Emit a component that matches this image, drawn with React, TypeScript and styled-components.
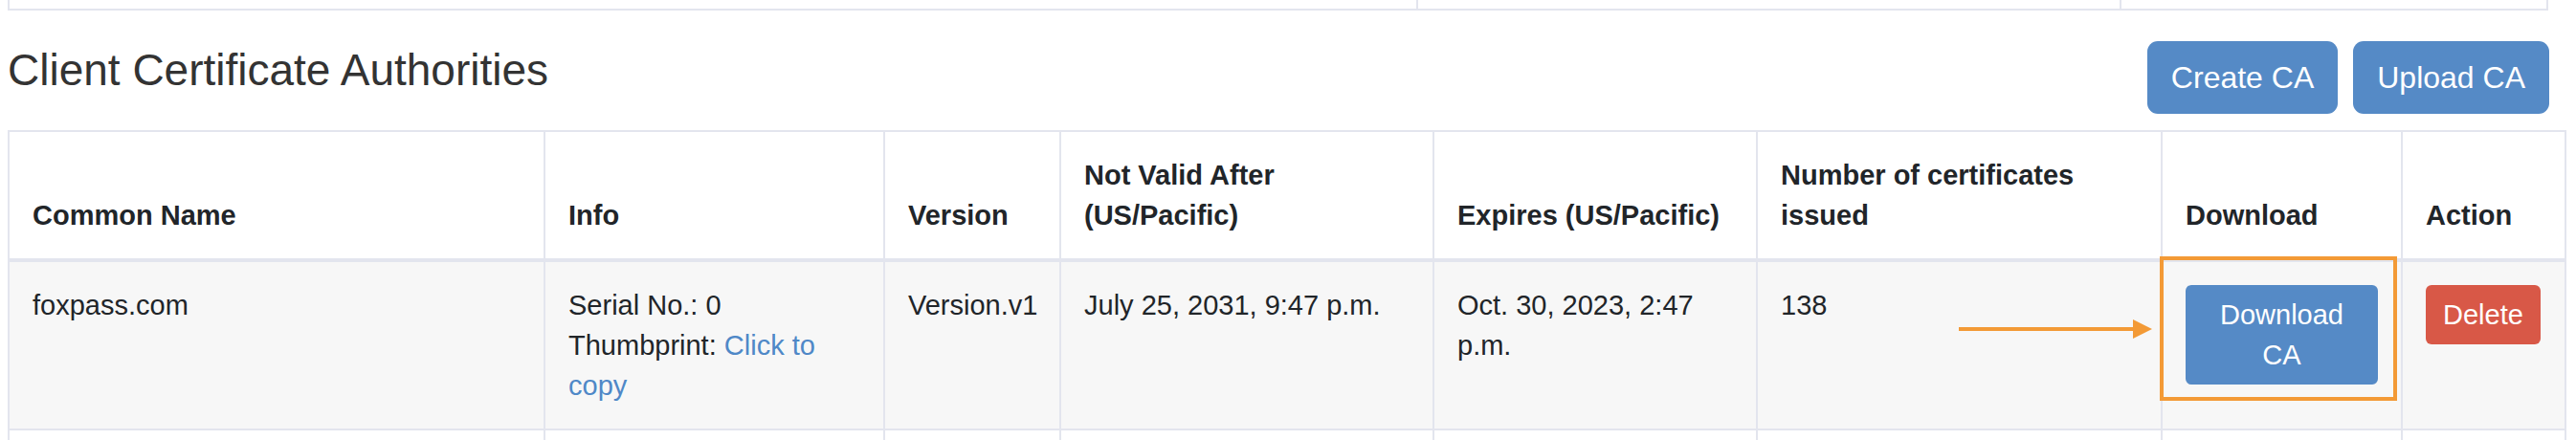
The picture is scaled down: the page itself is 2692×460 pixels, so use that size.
import React from "react";
import styled, { createGlobalStyle } from "styled-components";

const Global = createGlobalStyle`
  html, body { margin: 0; padding: 0; background: #ffffff; }
  body { font-family: "Liberation Sans", Arial, Helvetica, sans-serif; color: #212529; }
  * { box-sizing: border-box; }
`;

const BORDER = "#e3e5ee";

const Page = styled.div`
  padding: 0 12px 0 8px;
  width: 2692px;
`;

const PrevTable = styled.table`
  width: 2653px;
  border-collapse: collapse;
  table-layout: fixed;
`;

const PrevCell = styled.td`
  height: 10px;
  padding: 0;
  border: 2px solid ${BORDER};
  border-top: none;
`;

const Header = styled.div`
  display: flex;
  justify-content: space-between;
  align-items: flex-start;
  margin-top: 32px;
  padding-right: 16px;
`;

const Title = styled.h3`
  margin: 3px 0 0 0;
  font-size: 46px;
  line-height: 54px;
  font-weight: 400;
  color: #333333;
`;

const ButtonGroup = styled.div`
  display: flex;
  gap: 16px;
`;

const Button = styled.button<{ $variant?: "primary" | "danger"; $size?: "lg" | "md"; $block?: boolean }>`
  font-family: "Liberation Sans", Arial, Helvetica, sans-serif;
  border: none;
  color: #ffffff;
  cursor: pointer;
  background: ${(p) => (p.$variant === "danger" ? "#d85847" : "#558ac6")};
  font-size: ${(p) => (p.$size === "lg" ? "32px" : "29px")};
  line-height: ${(p) => (p.$size === "lg" ? "48px" : "42px")};
  padding: ${(p) => (p.$size === "lg" ? "14px 25px" : "10px 18px")};
  border-radius: ${(p) => (p.$size === "lg" ? "11px" : "6px")};
  width: ${(p) => (p.$block ? "100%" : "auto")};
  display: ${(p) => (p.$block ? "block" : "inline-block")};
  text-align: center;
`;

const Table = styled.table`
  margin-top: 17px;
  width: 2672px;
  border-collapse: collapse;
  table-layout: fixed;
  font-size: 29px;
  line-height: 42px;
`;

const Th = styled.th`
  text-align: left;
  vertical-align: bottom;
  font-weight: 700;
  padding: 24px;
  border: 2px solid ${BORDER};
  border-bottom: 4px solid ${BORDER};
  color: #212529;
`;

const Row = styled.tr<{ $striped?: boolean }>`
  background: ${(p) => (p.$striped ? "#f7f7f7" : "#ffffff")};
`;

const Td = styled.td<{ $anchor?: boolean }>`
  vertical-align: top;
  padding: 24px;
  border: 2px solid ${BORDER};
  position: ${(p) => (p.$anchor ? "relative" : "static")};
`;

const InfoLine = styled.div``;

const Link = styled.a`
  color: #4f88c7;
  text-decoration: none;
  cursor: pointer;
`;

const Highlight = styled.div`
  position: absolute;
  left: -3px;
  top: -6px;
  width: 248px;
  height: 151px;
  border: 4px solid #f39a36;
  pointer-events: none;
`;

const Arrow = styled.svg`
  position: absolute;
  left: -213px;
  top: 60px;
  overflow: visible;
`;

const EmptyRow = styled.tr``;

const EmptyTd = styled.td`
  height: 20px;
  border: 2px solid ${BORDER};
  border-bottom: none;
  padding: 0;
`;

const columns = [560, 355, 184, 390, 338, 423, 251, 171];

export default function App() {
  return (
    <>
      <Global />
      <Page>
        <PrevTable>
          <colgroup>
            <col style={{ width: 1472 }} />
            <col style={{ width: 735 }} />
            <col style={{ width: 446 }} />
          </colgroup>
          <tbody>
            <tr>
              <PrevCell />
              <PrevCell />
              <PrevCell />
            </tr>
          </tbody>
        </PrevTable>

        <Header>
          <Title>Client Certificate Authorities</Title>
          <ButtonGroup>
            <Button $size="lg">Create CA</Button>
            <Button $size="lg">Upload CA</Button>
          </ButtonGroup>
        </Header>

        <Table>
          <colgroup>
            {columns.map((w, i) => (
              <col key={i} style={{ width: w }} />
            ))}
          </colgroup>
          <thead>
            <tr>
              <Th>Common Name</Th>
              <Th>Info</Th>
              <Th>Version</Th>
              <Th>Not Valid After (US/Pacific)</Th>
              <Th>Expires (US/Pacific)</Th>
              <Th>Number of certificates issued</Th>
              <Th>Download</Th>
              <Th>Action</Th>
            </tr>
          </thead>
          <tbody>
            <Row $striped>
              <Td>foxpass.com</Td>
              <Td>
                <InfoLine>Serial No.: 0</InfoLine>
                <InfoLine>
                  Thumbprint: <Link>Click to copy</Link>
                </InfoLine>
              </Td>
              <Td>Version.v1</Td>
              <Td>July 25, 2031, 9:47 p.m.</Td>
              <Td>Oct. 30, 2023, 2:47 p.m.</Td>
              <Td>138</Td>
              <Td $anchor>
                <Arrow width="202" height="20" viewBox="0 0 202 20">
                  <line x1="0" y1="10" x2="184" y2="10" stroke="#f39a36" strokeWidth="4" />
                  <polygon points="182,0 202,10 182,20" fill="#f39a36" />
                </Arrow>
                <Button $block>Download CA</Button>
                <Highlight />
              </Td>
              <Td>
                <Button $variant="danger">Delete</Button>
              </Td>
            </Row>
            <EmptyRow>
              {columns.map((_, i) => (
                <EmptyTd key={i} />
              ))}
            </EmptyRow>
          </tbody>
        </Table>
      </Page>
    </>
  );
}
